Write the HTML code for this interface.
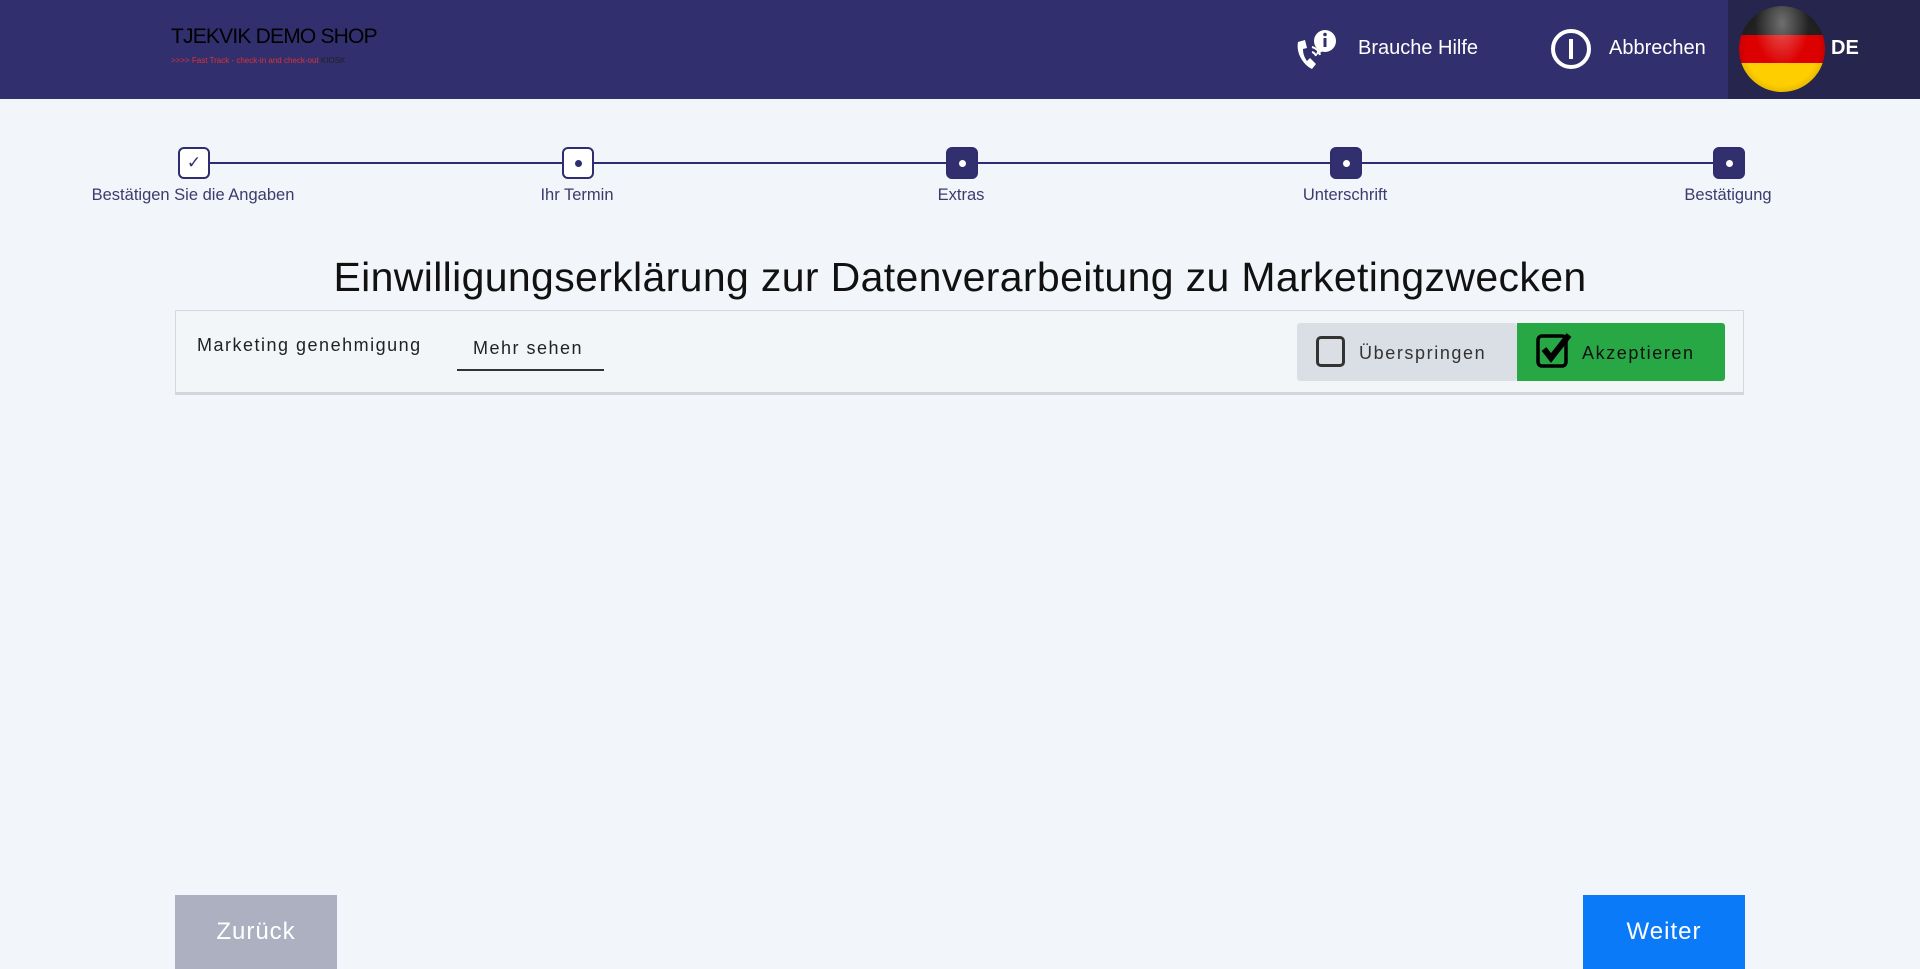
<!DOCTYPE html>
<html><head><meta charset="utf-8"><style>
*{box-sizing:border-box;margin:0;padding:0}
body{width:1920px;height:969px;overflow:hidden;background:#f2f5f9;font-family:"Liberation Sans",sans-serif;position:relative}
.hdr{position:absolute;left:0;top:0;width:1920px;height:99px;background:#312f6e}
.abs{position:absolute}
.step{position:absolute;top:147px;width:32px;height:32px;border:2px solid #2f2d70;border-radius:6px;background:#fff;display:flex;align-items:center;justify-content:center}
.step.f{background:#312f6e}
.dot{width:7px;height:7px;border-radius:50%;background:#2f2d70}
.step.f .dot{background:#fff}
.lbl{position:absolute;top:186px;font-size:16.5px;color:#3d3b6e;transform:translateX(-50%);white-space:nowrap}
</style></head><body>
<div class="hdr"></div>
<div class="abs" style="left:171px;top:25px;font-size:21px;color:#000;letter-spacing:-0.8px">TJEKVIK DEMO SHOP</div>
<div class="abs" style="left:171px;top:56px;font-size:8px;color:#d33;white-space:nowrap">&gt;&gt;&gt;&gt; Fast Track - check-in and check-out <span style="color:#222">KIOSK</span></div>
<svg class="abs" style="left:1294px;top:28px" width="46" height="44" viewBox="0 0 46 44"><path d="M4 14 C2 24 8 36 18 41 L22 36 L16 30 L13 33 C10 29 9 25 9 21 L13 20 L11 12 Z" fill="#fff"/><circle cx="31" cy="13" r="11" fill="#fff"/><path d="M24 22 L21 28 L29 23 Z" fill="#fff"/><rect x="29.5" y="10" width="3" height="9" fill="#312f6e"/><circle cx="31" cy="6.5" r="1.8" fill="#312f6e"/><path d="M18 24 a6 6 0 0 1 4 4 M18 19 a11 11 0 0 1 8 8" stroke="#fff" stroke-width="2" fill="none"/></svg>
<div class="abs" style="left:1358px;top:37px;font-size:20px;color:#fff">Brauche Hilfe</div>
<svg class="abs" style="left:1550px;top:28px" width="42" height="42" viewBox="0 0 42 42"><circle cx="21" cy="21" r="18" stroke="#fff" stroke-width="4" fill="none"/><rect x="19" y="11" width="4" height="20" fill="#fff"/></svg>
<div class="abs" style="left:1609px;top:37px;font-size:20px;color:#fff">Abbrechen</div>
<div class="abs" style="left:1728px;top:0;width:192px;height:99px;background:#25254d"></div>
<div class="abs" style="left:1739px;top:6px;width:86px;height:86px;border-radius:50%;overflow:hidden;background:linear-gradient(#222 0 34%,#dd0000 34% 66%,#ffce00 66%)"><div style="position:absolute;inset:0;border-radius:50%;background:radial-gradient(ellipse at 50% 20%,rgba(255,255,255,.35),transparent 45%),radial-gradient(circle,transparent 60%,rgba(0,0,0,.35))"></div></div>
<div class="abs" style="left:1831px;top:37px;font-size:20px;color:#fff;font-weight:bold">DE</div>

<div class="abs" style="left:193px;top:162px;width:1536px;height:2px;background:#2f2d70"></div>
<div class="step" style="left:178px"><span style="color:#2f2d70;font-size:17px">✓</span></div>
<div class="step" style="left:562px"><div class="dot"></div></div>
<div class="step f" style="left:946px"><div class="dot"></div></div>
<div class="step f" style="left:1330px"><div class="dot"></div></div>
<div class="step f" style="left:1713px"><div class="dot"></div></div>
<div class="lbl" style="left:193px">Bestätigen Sie die Angaben</div>
<div class="lbl" style="left:577px">Ihr Termin</div>
<div class="lbl" style="left:961px">Extras</div>
<div class="lbl" style="left:1345px">Unterschrift</div>
<div class="lbl" style="left:1728px">Bestätigung</div>

<div class="abs" style="left:0;width:1920px;top:254px;text-align:center;font-size:41px;letter-spacing:0.35px;color:#111">Einwilligungserklärung zur Datenverarbeitung zu Marketingzwecken</div>
<div class="abs" style="left:175px;top:310px;width:1569px;height:85px;border:1px solid #d6d9de;border-bottom:3px solid #d3d6db;background:#f3f6f9"></div>
<div class="abs" style="left:197px;top:335px;font-size:18px;letter-spacing:1.5px;color:#222">Marketing genehmigung</div>
<div class="abs" style="left:473px;top:338px;font-size:18px;letter-spacing:1.5px;color:#222">Mehr sehen</div>
<div class="abs" style="left:457px;top:369px;width:147px;height:2px;background:#333"></div>
<div class="abs" style="left:1297px;top:323px;width:220px;height:58px;background:#dadee5;border-radius:3px"></div>
<div class="abs" style="left:1316px;top:336px;width:29px;height:31px;border:3px solid #333;border-radius:5px"></div>
<div class="abs" style="left:1359px;top:343px;font-size:18px;letter-spacing:1.6px;color:#333">Überspringen</div>
<div class="abs" style="left:1517px;top:323px;width:208px;height:58px;background:#28a745;border-radius:0 3px 3px 0"></div>
<svg class="abs" style="left:1536px;top:332px" width="42" height="38" viewBox="0 0 42 38"><rect x="2" y="4" width="28" height="30" rx="4" stroke="#000" stroke-width="3.5" fill="none"/><path d="M8 17 L15 26 L33 3" stroke="#000" stroke-width="6" fill="none"/></svg>
<div class="abs" style="left:1582px;top:343px;font-size:18px;letter-spacing:1.6px;color:#111">Akzeptieren</div>

<div class="abs" style="left:175px;top:895px;width:162px;height:74px;background:#adb0c0;color:#fff;font-size:24px;letter-spacing:1px;display:flex;align-items:center;justify-content:center">Zurück</div>
<div class="abs" style="left:1583px;top:895px;width:162px;height:74px;background:#0a7af9;color:#fff;font-size:24px;letter-spacing:1px;display:flex;align-items:center;justify-content:center">Weiter</div>
</body></html>
